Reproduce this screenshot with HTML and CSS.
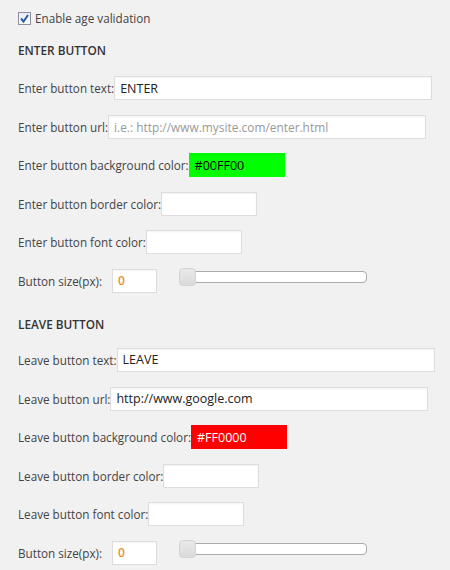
FILE: index.html
```html
<!DOCTYPE html>
<html>
<head>
<meta charset="utf-8">
<link rel="stylesheet" href="styles.css">
</head>
<body>
<div class="page">
  <label class="check-row">
    <span class="checkbox"><svg width="11" height="11" viewBox="0 0 11 11"><path d="M2 5.5 L4.5 8.5 L9 2" fill="none" stroke="#2a5fa8" stroke-width="2"/></svg></span>
    <span>Enable age validation</span>
  </label>

  <h3 class="section-title first">ENTER BUTTON</h3>
  <div class="fields">
    <div class="row"><span class="lbl">Enter button text:</span><span class="input wide">ENTER</span></div>
    <div class="row"><span class="lbl">Enter button url:</span><span class="input wide placeholder">i.e.: http://www.mysite.com/enter.html</span></div>
    <div class="row"><span class="lbl">Enter button background color:</span><span class="input color green">#00FF00</span></div>
    <div class="row"><span class="lbl">Enter button border color:</span><span class="input color"></span></div>
    <div class="row"><span class="lbl">Enter button font color:</span><span class="input color"></span></div>
    <div class="row"><span class="lbl size-lbl">Button size(px):</span><span class="input small">0</span>
      <span class="slider"><span class="handle"></span></span></div>
  </div>

  <h3 class="section-title second">LEAVE BUTTON</h3>
  <div class="fields">
    <div class="row"><span class="lbl">Leave button text:</span><span class="input wide">LEAVE</span></div>
    <div class="row"><span class="lbl">Leave button url:</span><span class="input wide">http://www.google.com</span></div>
    <div class="row"><span class="lbl">Leave button background color:</span><span class="input color red">#FF0000</span></div>
    <div class="row"><span class="lbl">Leave button border color:</span><span class="input color"></span></div>
    <div class="row"><span class="lbl">Leave button font color:</span><span class="input color"></span></div>
    <div class="row"><span class="lbl size-lbl">Button size(px):</span><span class="input small">0</span>
      <span class="slider"><span class="handle"></span></span></div>
  </div>
</div>
</body>
</html>
```

FILE: styles.css
```css
html, body {
  margin: 0;
  padding: 0;
  background: #f1f1f1;
}
body {
  font-family: "Open Sans", "Noto Sans", sans-serif;
  font-size: 11.7px;
  color: #444;
}
.page {
  padding: 11px 0 0 18px;
}
.check-row {
  display: flex;
  align-items: center;
  gap: 4px;
  height: 14px;
}
.checkbox {
  width: 11px;
  height: 11px;
  border: 1px solid #8f8f9d;
  background: linear-gradient(#e8ecf3, #fbfcfd);
  display: flex;
  align-items: center;
  justify-content: center;
}
.section-title {
  font-size: 11.8px;
  font-weight: 600;
  color: #333;
  margin: 18px 0 18px;
  line-height: 16px;
}
.section-title.first {
  margin-top: 17px;
}
.section-title.second {
  margin-top: 23px;
  margin-bottom: 16px;
}
.fields {
  display: flex;
  flex-direction: column;
  gap: 14.6px;
}
.row {
  display: flex;
  align-items: center;
  height: 24px;
}
.lbl {
  white-space: nowrap;
}
.input {
  box-sizing: border-box;
  height: 24px;
  background: #fff;
  border: 1px solid #ddd;
  box-shadow: inset 0 1px 2px rgba(0,0,0,0.05);
  margin-left: 0;
  padding: 0 5px;
  display: flex;
  align-items: center;
  color: #222;
  font-size: 12.5px;
  white-space: nowrap;
  overflow: hidden;
}
.input.wide { width: 318px; }
.input.placeholder { color: #999; font-size: 11.9px; }
.input.color { width: 96px; }
.input.green { background: #00ff00; border-color: #00ff00; color: #000; }
.input.red { background: #ff0000; border-color: #ff0000; color: #fff; }
.size-lbl { margin-right: 10px; }
.input.small {
  width: 45px;
  color: #e8902e;
  font-size: 12px;
  font-weight: 600;
}
.slider {
  position: relative;
  margin-left: 22px;
  width: 188px;
  height: 12px;
  box-sizing: border-box;
  border: 1px solid #aaa;
  border-radius: 4px;
  background: #fff;
  margin-top: -7px;
}
.handle {
  position: absolute;
  left: -1px;
  top: -4px;
  width: 17px;
  height: 18px;
  box-sizing: border-box;
  border: 1px solid #d3d3d3;
  border-radius: 4px;
  background: linear-gradient(#e9e9e9, #dadada);
}
```
